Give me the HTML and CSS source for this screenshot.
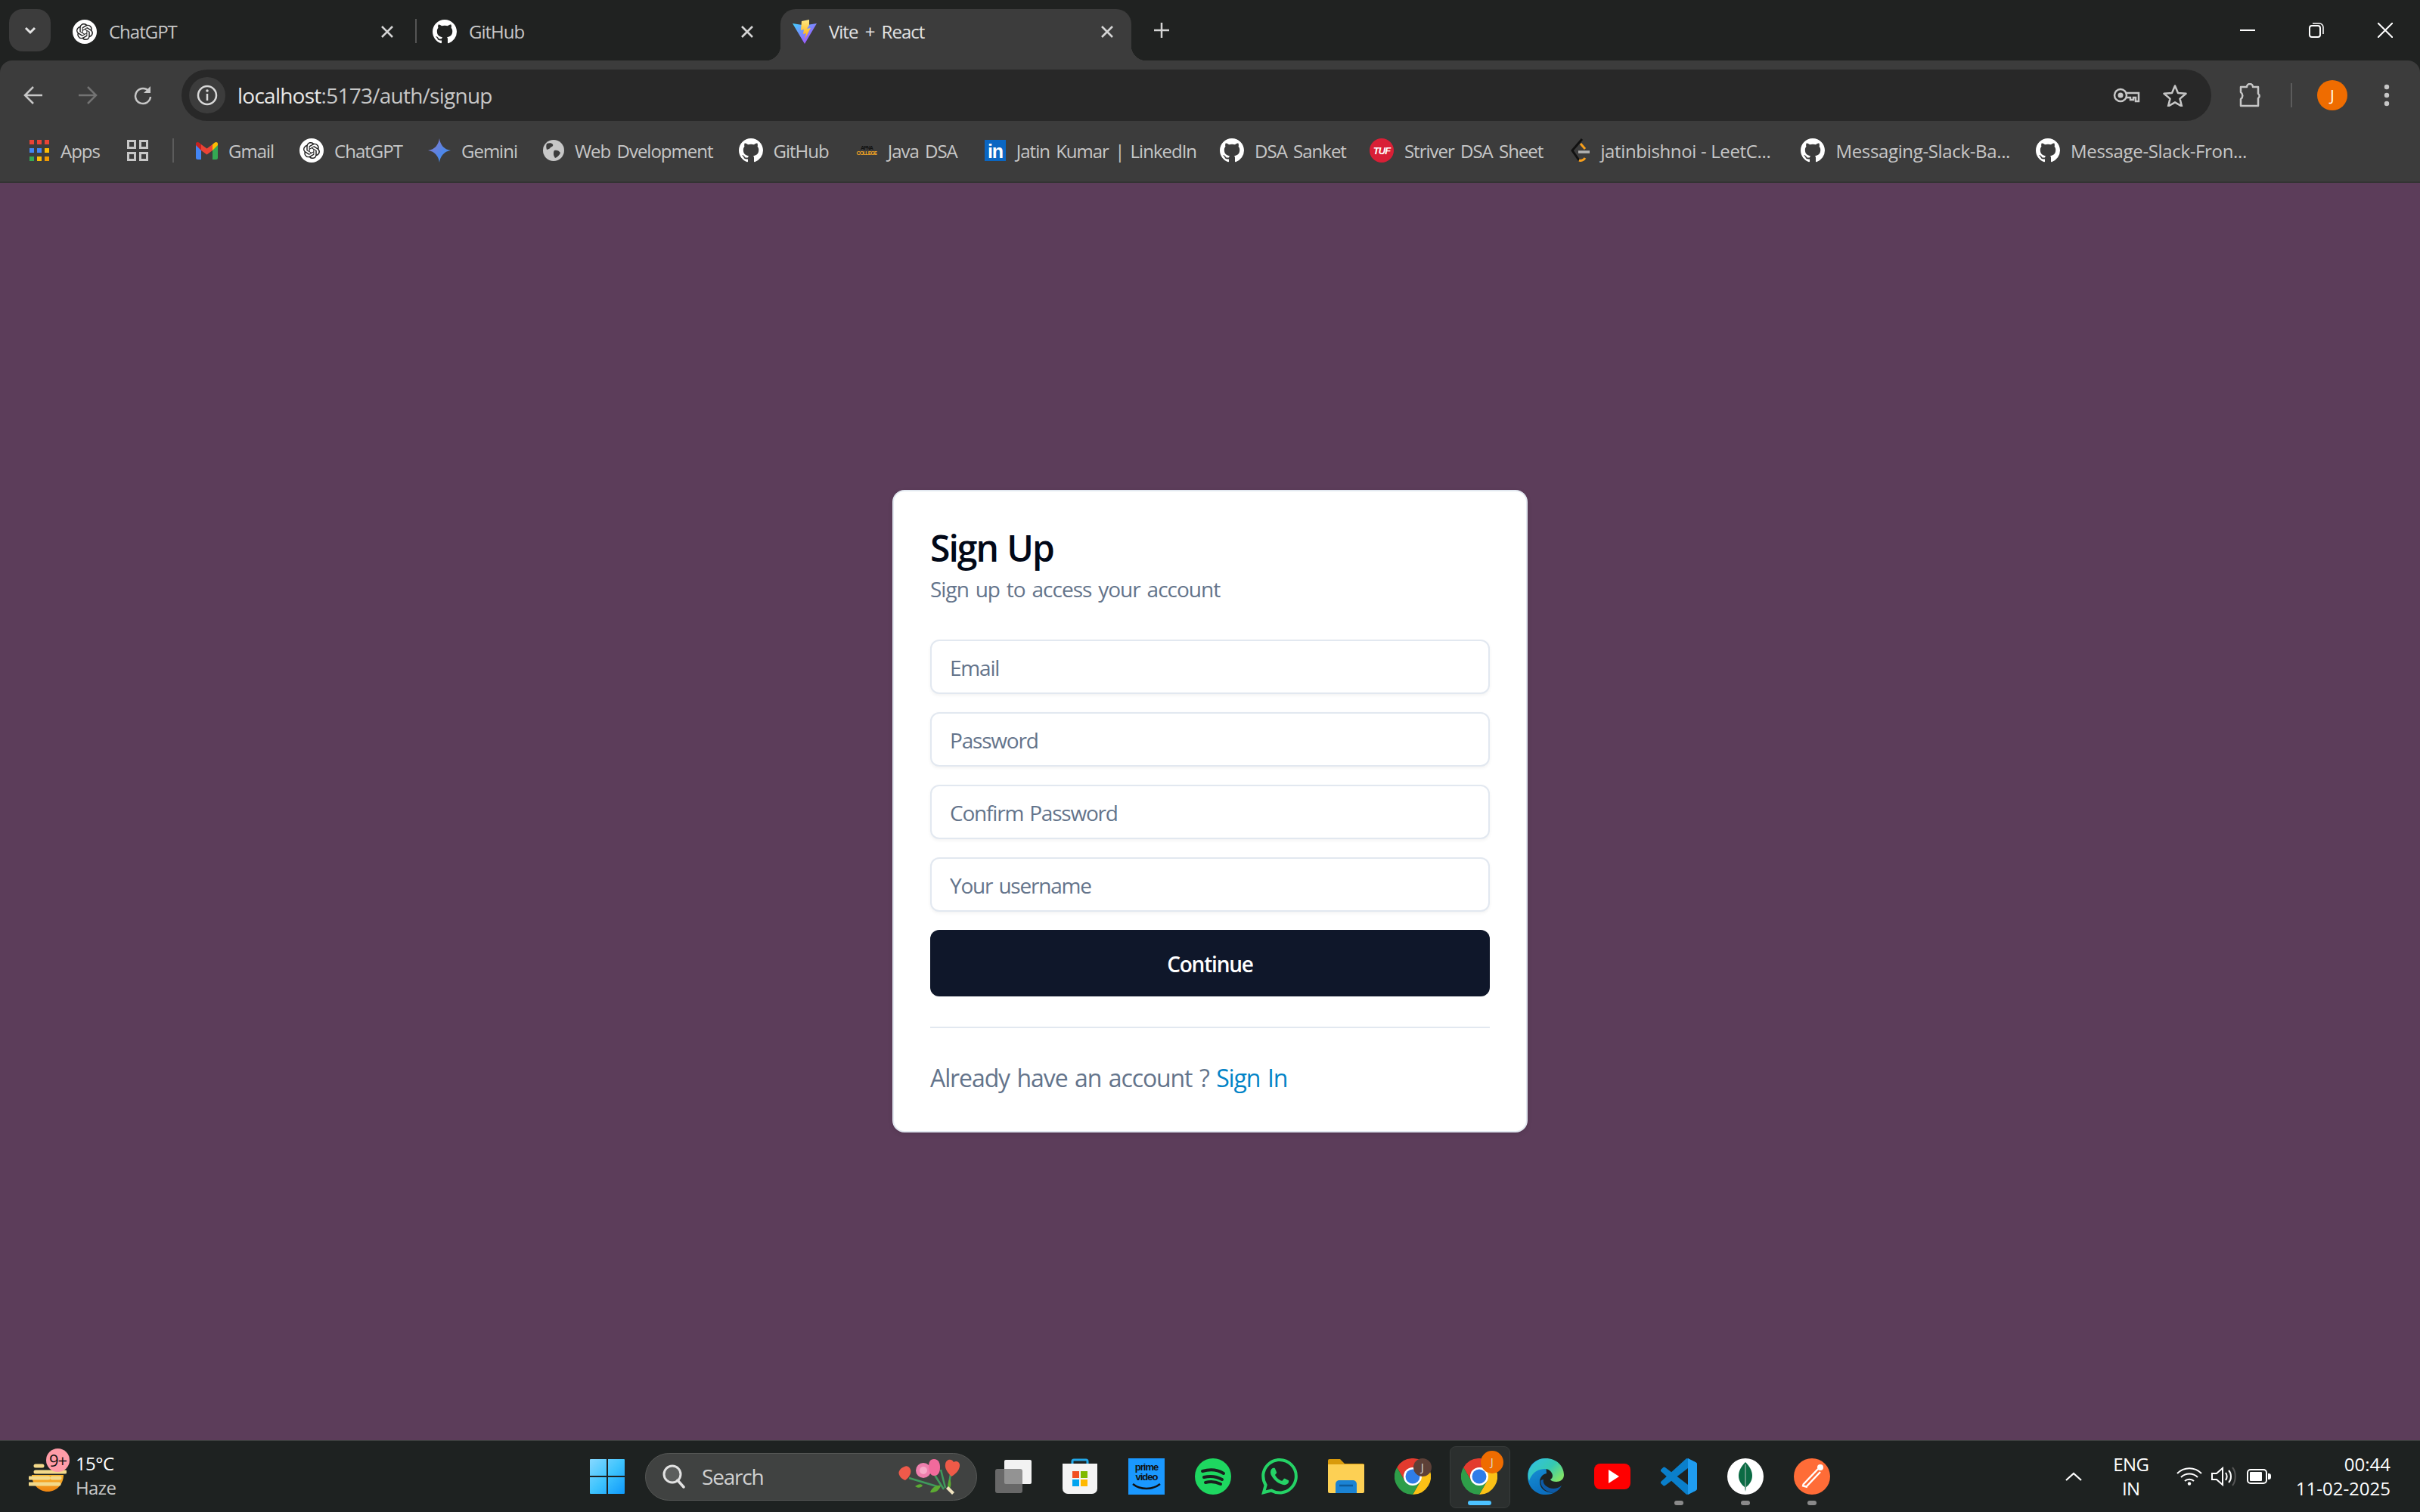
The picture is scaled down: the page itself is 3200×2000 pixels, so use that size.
FILE: index.html
```html
<!DOCTYPE html>
<html lang="en">
<head>
  <meta charset="UTF-8" />
  <title>Vite + React</title>
  <link rel="stylesheet" href="styles.css">
</head>
<body>

<svg class="defs" xmlns="http://www.w3.org/2000/svg">
  <symbol id="i-github" viewBox="0 0 16 16">
    <path fill="#fff" d="M8 0C3.58 0 0 3.58 0 8c0 3.54 2.29 6.53 5.47 7.59.4.07.55-.17.55-.38 0-.19-.01-.82-.01-1.49-2.01.37-2.53-.49-2.69-.94-.09-.23-.48-.94-.82-1.13-.28-.15-.68-.52-.01-.53.63-.01 1.08.58 1.23.82.72 1.21 1.87.87 2.33.66.07-.52.28-.87.51-1.07-1.78-.2-3.64-.89-3.64-3.95 0-.87.31-1.59.82-2.15-.08-.2-.36-1.02.08-2.12 0 0 .67-.21 2.2.82.64-.18 1.32-.27 2-.27.68 0 1.36.09 2 .27 1.53-1.04 2.2-.82 2.2-.82.44 1.1.16 1.92.08 2.12.51.56.82 1.27.82 2.15 0 3.07-1.87 3.75-3.65 3.95.29.25.54.73.54 1.48 0 1.07-.01 1.93-.01 2.2 0 .21.15.46.55.38A8.013 8.013 0 0016 8c0-4.42-3.58-8-8-8z"/>
  </symbol>
  <symbol id="i-chatgpt" viewBox="0 0 32 32">
    <circle cx="16" cy="16" r="16" fill="#fff"/>
    <path transform="translate(5 5) scale(.917)" fill="#222" d="M22.282 9.821a5.985 5.985 0 0 0-.516-4.91 6.046 6.046 0 0 0-6.51-2.9A6.065 6.065 0 0 0 4.981 4.18a5.985 5.985 0 0 0-3.998 2.9 6.046 6.046 0 0 0 .743 7.097 5.98 5.98 0 0 0 .51 4.911 6.051 6.051 0 0 0 6.515 2.9A5.985 5.985 0 0 0 13.26 24a6.056 6.056 0 0 0 5.772-4.206 5.99 5.99 0 0 0 3.997-2.9 6.056 6.056 0 0 0-.747-7.073zM13.26 22.43a4.476 4.476 0 0 1-2.876-1.04l.141-.081 4.779-2.758a.795.795 0 0 0 .392-.681v-6.737l2.02 1.168a.071.071 0 0 1 .038.052v5.583a4.504 4.504 0 0 1-4.494 4.494zM3.6 18.304a4.47 4.47 0 0 1-.535-3.014l.142.085 4.783 2.759a.771.771 0 0 0 .78 0l5.843-3.369v2.332a.08.08 0 0 1-.033.062L9.74 19.95a4.5 4.5 0 0 1-6.14-1.646zM2.34 7.896a4.485 4.485 0 0 1 2.366-1.973V11.6a.766.766 0 0 0 .388.676l5.815 3.355-2.02 1.168a.076.076 0 0 1-.071 0l-4.83-2.786A4.504 4.504 0 0 1 2.34 7.872zm16.597 3.855l-5.833-3.387L15.119 7.2a.076.076 0 0 1 .071 0l4.83 2.791a4.494 4.494 0 0 1-.676 8.105v-5.678a.79.79 0 0 0-.407-.667zm2.01-3.023l-.141-.085-4.774-2.782a.776.776 0 0 0-.785 0L9.409 9.23V6.897a.066.066 0 0 1 .028-.061l4.83-2.787a4.5 4.5 0 0 1 6.68 4.66zm-12.64 4.135l-2.02-1.164a.08.08 0 0 1-.038-.057V6.075a4.5 4.5 0 0 1 7.375-3.453l-.142.08L8.704 5.46a.795.795 0 0 0-.393.681zm1.097-2.365l2.602-1.5 2.607 1.5v2.999l-2.597 1.5-2.607-1.5Z"/>
  </symbol>
  <symbol id="i-chrome" viewBox="0 0 48 48">
    <path fill="#e33b2e" d="M3.2 12A24 24 0 0 1 44.8 12H24L13.6 30Z"/>
    <path fill="#fbc116" d="M44.8 12A24 24 0 0 1 24 48L34.4 30 24 12Z"/>
    <path fill="#2e9e49" d="M24 48A24 24 0 0 1 3.2 12L13.6 30H34.4Z"/>
    <circle cx="24" cy="24" r="12" fill="#fff"/>
    <circle cx="24" cy="24" r="9.5" fill="#2f7de8"/>
  </symbol>
  <symbol id="i-close" viewBox="0 0 16 16">
    <path d="M1 1l14 14M15 1L1 15" stroke="#d5d5d5" stroke-width="2.600" fill="none"/>
  </symbol>
</svg>

<header class="chrome">
  <div class="titlebar">
    <button class="tab-search">
      <svg width="16" height="16" viewBox="0 0 16 16"><path d="M2 5l6 6 6-6" fill="none" stroke="#e3e3e3" stroke-width="3"/></svg>
    </button>
    <div class="tab tab-sep">
      <svg class="tab-icon" width="32" height="32"><use href="#i-chatgpt"/></svg>
      <span class="tab-title">ChatGPT</span>
      <svg class="tab-close" width="16" height="16"><use href="#i-close"/></svg>
    </div>
    <div class="tab">
      <svg class="tab-icon" width="32" height="32"><use href="#i-github"/></svg>
      <span class="tab-title">GitHub</span>
      <svg class="tab-close" width="16" height="16"><use href="#i-close"/></svg>
    </div>
    <div class="tab tab-active">
      <svg class="tab-icon" width="32" height="32" viewBox="0 0 32 32">
        <defs>
          <linearGradient id="viteA" x1="0" y1="0" x2="1" y2="1"><stop offset="0" stop-color="#41d1ff"/><stop offset="1" stop-color="#bd34fe"/></linearGradient>
          <linearGradient id="viteB" x1="0" y1="0" x2="0" y2="1"><stop offset="0" stop-color="#ffea83"/><stop offset="1" stop-color="#ffa800"/></linearGradient>
        </defs>
        <path fill="url(#viteA)" d="M0 5l16 2.500 16-2.500-16 27z"/>
        <path fill="url(#viteB)" d="M22 0l-10 2-1 12 4-1-1 6 4-1-2 8 8-15-5 1 3-5z"/>
      </svg>
      <span class="tab-title">Vite + React</span>
      <svg class="tab-close" width="16" height="16"><use href="#i-close"/></svg>
    </div>
    <svg class="new-tab" width="22" height="22" viewBox="0 0 22 22"><path d="M11 1v20M1 11h20" stroke="#d5d5d5" stroke-width="2.500"/></svg>

    <div class="win-controls">
      <button class="win-btn"><svg width="20" height="20" viewBox="0 0 20 20"><path d="M0 10h20" stroke="#fff" stroke-width="2"/></svg></button>
      <button class="win-btn"><svg width="20" height="20" viewBox="0 0 20 20"><rect x="1" y="4" width="14" height="15" rx="3" fill="none" stroke="#fff" stroke-width="2"/><path d="M5 1h9a5 5 0 0 1 5 5v9" fill="none" stroke="#fff" stroke-width="1.500"/></svg></button>
      <button class="win-btn"><svg width="20" height="20" viewBox="0 0 20 20"><path d="M0 0l20 20M20 0L0 20" stroke="#fff" stroke-width="2"/></svg></button>
    </div>
  </div>

  <div class="toolbar">
    <button class="tool-btn">
      <svg width="26" height="26" viewBox="0 0 26 26"><path d="M25 13H3M13 2L2 13l11 11" fill="none" stroke="#c7c7c7" stroke-width="2.500"/></svg>
    </button>
    <button class="tool-btn">
      <svg width="26" height="26" viewBox="0 0 26 26"><path d="M1 13h22M13 2l11 11-11 11" fill="none" stroke="#737373" stroke-width="2.500"/></svg>
    </button>
    <button class="tool-btn">
      <svg width="26" height="26" viewBox="0 0 26 26"><path d="M22 8a10 10 0 1 0 2 7" fill="none" stroke="#c7c7c7" stroke-width="2.500"/><path d="M24 1v9h-9z" fill="#c7c7c7"/></svg>
    </button>
    <div class="omnibox">
      <span class="site-info">
        <svg width="28" height="28" viewBox="0 0 28 28"><circle cx="14" cy="14" r="12" fill="none" stroke="#d8d8d8" stroke-width="2.500"/><path d="M14 12v9" stroke="#d8d8d8" stroke-width="2.500"/><circle cx="14" cy="8" r="1.800" fill="#d8d8d8"/></svg>
      </span>
      <span class="url"><b>localhost</b>:5173/auth/signup</span>
      <button class="omni-btn omni-key">
        <svg width="36" height="22" viewBox="0 0 36 22"><circle cx="10" cy="11" r="8" fill="none" stroke="#c7c7c7" stroke-width="2.500"/><circle cx="10" cy="11" r="3.500" fill="#c7c7c7"/><path d="M18 8h16v11h-4v-5h-3v3h-4v-3h-5" fill="none" stroke="#c7c7c7" stroke-width="2.500"/></svg>
      </button>
      <button class="omni-btn">
        <svg width="32" height="30" viewBox="0 0 32 30"><path d="M16 2.500l4 9.500 10.500.8-8 6.800 2.500 10-9-5.300-9 5.300 2.500-10-8-6.800L12 12z" fill="none" stroke="#c7c7c7" stroke-width="2.500" stroke-linejoin="round"/></svg>
      </button>
    </div>
    <button class="tool-btn tool-ext">
      <svg width="30" height="32" viewBox="0 0 30 32"><path d="M2 5h8a4 4 0 0 1 8 0h7v9a3.500 3.500 0 0 1 0 6v10H2v-9a5.500 5.500 0 0 0 0-9z" fill="none" stroke="#c7c7c7" stroke-width="2.500" stroke-linejoin="round"/></svg>
    </button>
    <span class="tool-sep"></span>
    <button class="tool-btn">
      <span class="avatar">J</span>
    </button>
    <button class="tool-btn">
      <svg width="8" height="30" viewBox="0 0 8 30"><circle cx="4" cy="4" r="3.200" fill="#c7c7c7"/><circle cx="4" cy="15" r="3.200" fill="#c7c7c7"/><circle cx="4" cy="26" r="3.200" fill="#c7c7c7"/></svg>
    </button>
  </div>

  <nav class="bookmarks">
    <a class="bm bm-apps">
      <svg width="26" height="28" viewBox="0 0 26 28">
        <path fill="#ea4335" d="M0 0h6v6H0zM10 0h6v6h-6zM20 0h6v6h-6z"/>
        <path fill="#4285f4" d="M0 11h6v6H0zM10 11h6v6h-6z"/><path fill="#fbbc05" d="M20 11h6v6h-6z"/>
        <path fill="#34a853" d="M0 22h6v6H0z"/><path fill="#fbbc05" d="M10 22h6v6h-6z"/><path fill="#f29900" d="M20 22h6v6h-6z"/>
      </svg>
      <span>Apps</span>
    </a>
    <a class="bm bm-far">
      <svg width="28" height="28" viewBox="0 0 28 28" fill="none" stroke="#c7c7c7" stroke-width="3"><rect x="1.500" y="1.500" width="9" height="9"/><rect x="17.500" y="1.500" width="9" height="9"/><rect x="1.500" y="17.500" width="9" height="9"/><rect x="17.500" y="17.500" width="9" height="9"/></svg>
    </a>
    <span class="bm-sep"></span>
    <a class="bm">
      <svg width="29" height="24" viewBox="0 0 29 24">
        <path fill="#4285f4" d="M0 3v18.500A2.500 2.500 0 0 0 2.500 24H7V11z"/>
        <path fill="#34a853" d="M22 11v13h4.500a2.500 2.500 0 0 0 2.500-2.500V3z"/>
        <path fill="#ea4335" d="M7 4v8l7.500 5.500L22 12V4l-7.500 5.500z"/>
        <path fill="#c5221f" d="M0 3v2l7 7V4L4 1.500C2.300.300 0 1 0 3z"/>
        <path fill="#fbbc04" d="M29 3v2l-7 7V4l3-2.500C26.700.300 29 1 29 3z"/>
      </svg>
      <span>Gmail</span>
    </a>
    <a class="bm">
      <svg width="32" height="32"><use href="#i-chatgpt"/></svg>
      <span>ChatGPT</span>
    </a>
    <a class="bm">
      <svg width="30" height="32" viewBox="0 0 30 32">
        <defs><linearGradient id="gem" x1="0" y1="0" x2="1" y2="1"><stop offset="0" stop-color="#9177c7"/><stop offset=".6" stop-color="#4f86e8"/><stop offset="1" stop-color="#3d9bf0"/></linearGradient></defs>
        <path fill="url(#gem)" d="M15 0c1 8 6 15 15 16-9 1-14 8-15 16-1-8-6-15-15-16 9-1 14-8 15-16z"/>
      </svg>
      <span>Gemini</span>
    </a>
    <a class="bm">
      <svg width="28" height="28" viewBox="0 0 28 28">
        <circle cx="14" cy="14" r="14" fill="#c7c7c7"/>
        <path fill="#3c3c3c" d="M5 5c3-1 7-1 8 1 1 2-1 3-3 4-1 2-3 2-5 3-1-3-1-6 0-8zM15 14c3-1 6 0 8 3-1 3-4 6-7 7-1-2-2-3-2-5s0-4 1-5z"/>
      </svg>
      <span>Web Dvelopment</span>
    </a>
    <a class="bm">
      <svg width="32" height="32"><use href="#i-github"/></svg>
      <span>GitHub</span>
    </a>
    <a class="bm bm-far">
      <svg width="28" height="14" viewBox="0 0 28 14">
        <text class="logo-apna" x="14" y="6" text-anchor="middle">APNA</text>
        <text class="logo-college" x="14" y="13" text-anchor="middle">COLLEGE</text>
      </svg>
      <span>Java DSA</span>
    </a>
    <a class="bm bm-far">
      <svg width="28" height="28" viewBox="0 0 28 28">
        <rect width="28" height="28" fill="#0a66c2"/>
        <text class="logo-in" x="14" y="24" text-anchor="middle">in</text>
      </svg>
      <span>Jatin Kumar | LinkedIn</span>
    </a>
    <a class="bm bm-near">
      <svg width="32" height="32"><use href="#i-github"/></svg>
      <span>DSA Sanket</span>
    </a>
    <a class="bm bm-near">
      <svg width="32" height="32" viewBox="0 0 32 32">
        <circle cx="16" cy="16" r="16" fill="#d91f36"/>
        <text class="logo-tuf" x="16" y="21" text-anchor="middle">TUF</text>
      </svg>
      <span>Striver DSA Sheet</span>
    </a>
    <a class="bm bm-far bm-trunc">
      <svg width="26" height="32" viewBox="0 0 26 32" fill="none">
        <path d="M16 1L3 16l9 13" stroke="#111" stroke-width="3"/>
        <path d="M14 7l6 7M12 29c3 1 6 0 8-3" stroke="#f89f1b" stroke-width="3"/>
        <path d="M11 18h15" stroke="#b3b3b3" stroke-width="3.500"/>
      </svg>
      <span>jatinbishnoi - LeetC...</span>
    </a>
    <a class="bm bm-farther bm-trunc">
      <svg width="32" height="32"><use href="#i-github"/></svg>
      <span>Messaging-Slack-Ba...</span>
    </a>
    <a class="bm bm-trunc">
      <svg width="32" height="32"><use href="#i-github"/></svg>
      <span>Message-Slack-Fron...</span>
    </a>
  </nav>
</header>

<main class="page">
  <section class="card">
    <h1 class="card-title">Sign Up</h1>
    <p class="card-sub">Sign up to access your account</p>
    <form class="signup-form">
      <input class="field" type="email" placeholder="Email">
      <input class="field" type="password" placeholder="Password">
      <input class="field" type="password" placeholder="Confirm Password">
      <input class="field" type="text" placeholder="Your username">
      <button class="continue" type="button">Continue</button>
    </form>
    <hr class="divider">
    <p class="switch">Already have an account ? <a>Sign In</a></p>
  </section>
</main>

<footer class="taskbar">
  <div class="weather">
    <svg class="weather-icon" width="50" height="45" viewBox="0 0 50 45">
      <defs><linearGradient id="sun" x1="0" y1="0" x2="0" y2="1"><stop offset="0" stop-color="#f9b52c"/><stop offset="1" stop-color="#ef8511"/></linearGradient></defs>
      <path d="M4 20h42c0 12-9 22-21 22S4 32 4 20z" fill="url(#sun)"/>
      <path d="M9 8h9M9 16h39M1 24h25M31 24h10M1 32h39" stroke="#f3d98a" stroke-width="5" stroke-linecap="round"/>
    </svg>
    <span class="weather-badge">9+</span>
    <div class="weather-text">
      <span>15°C</span>
      <span class="weather-cond">Haze</span>
    </div>
  </div>

  <div class="task-center">
    <svg class="win-logo" width="46" height="46" viewBox="0 0 46 46">
      <defs><linearGradient id="winG" x1="0" y1="0" x2="1" y2="1"><stop offset="0" stop-color="#86d8ff"/><stop offset=".5" stop-color="#3fc4fd"/><stop offset="1" stop-color="#0f9afb"/></linearGradient></defs>
      <path fill="url(#winG)" d="M1 0h21v22H0V1a1 1 0 0 1 1-1zM24 0h21a1 1 0 0 1 1 1v21H24zM0 24h22v22H1a1 1 0 0 1-1-1zM24 24h22v21a1 1 0 0 1-1 1H24z"/>
    </svg>
    <div class="search">
      <svg width="30" height="32" viewBox="0 0 30 32"><circle cx="13" cy="13" r="11" fill="#5c5e5d" stroke="#e2e2e2" stroke-width="3"/><path d="M20 21l8 9" stroke="#e2e2e2" stroke-width="3.500" stroke-linecap="round"/></svg>
      <span class="search-text">Search</span>
      <svg class="search-flowers" width="84" height="47" viewBox="0 0 84 47">
        <path d="M14 25l40 12M46 18l14 22M56 14l6 24M70 14l-4 24" stroke="#3f9a5c" stroke-width="2.500" fill="none"/>
        <path d="M22 36c4-3 8-4 10-1-2 3-6 4-10 1zM42 44c2-6 8-10 14-9-2 7-8 10-14 9zM68 26c-3 5-3 10-1 14 3-3 3-9 1-14z" fill="#5cab32"/>
        <path d="M66 36l8 8-3 3-8-8z" fill="#efe3c0"/>
        <path d="M8 10c4-2 7 1 8 4s0 9-7 14C3 26-1 20 1 16c1-3 4-5 7-6z" fill="#ef5a4a"/>
        <circle cx="33" cy="15" r="10" fill="#ee7fae"/><circle cx="33" cy="15" r="5" fill="#f7a9c8"/>
        <path d="M47 0c6 0 8 5 8 11s-2 11-8 11c-5 0-7-6-7-12 0-6 2-10 7-10z" fill="#f26a9c"/>
        <path d="M66 1c4-1 6 1 7 3 3-2 7-1 8 3 1 6-5 13-11 16-5-5-9-11-8-16 0-3 2-5 4-6z" fill="#ee5a48"/>
      </svg>
    </div>
    <div class="task-apps">
      <span class="task-item">
        <svg width="48" height="48" viewBox="0 0 48 48">
          <rect x="12" y="2" width="36" height="32" rx="2" fill="#f2f2f2"/>
          <rect x="0" y="14" width="36" height="32" rx="3" fill="#7b7b7b" fill-opacity=".8"/>
        </svg>
      </span>
      <span class="task-item">
        <svg width="48" height="48" viewBox="0 0 48 48">
          <path d="M14 10V4a2 2 0 0 1 2-2h16a2 2 0 0 1 2 2v6" fill="none" stroke="#22a7e8" stroke-width="3"/>
          <path d="M1 7h46v33a7 7 0 0 1-7 7H8a7 7 0 0 1-7-7z" fill="#f4f4f4"/>
          <path fill="#f25022" d="M14 17h9v9h-9z"/><path fill="#7fba00" d="M25 17h9v9h-9z"/>
          <path fill="#00a4ef" d="M14 28h9v9h-9z"/><path fill="#ffb900" d="M25 28h9v9h-9z"/>
        </svg>
      </span>
      <span class="task-item">
        <svg width="48" height="48" viewBox="0 0 48 48">
          <rect width="48" height="48" fill="#1a98ff"/>
          <text class="logo-prime" x="24" y="16" text-anchor="middle">prime</text>
          <text class="logo-prime" x="24" y="29" text-anchor="middle">video</text>
          <path d="M6 34c10 8 26 8 36 0" fill="none" stroke="#111" stroke-width="2.500"/>
        </svg>
      </span>
      <span class="task-item">
        <svg width="48" height="48" viewBox="0 0 48 48">
          <circle cx="24" cy="24" r="24" fill="#1ed760"/>
          <path d="M10 17c10-3 20-2 28 3M12 25c8-2 17-1 24 3M14 32c7-2 14-1 20 2" fill="none" stroke="#1b1f1e" stroke-width="4" stroke-linecap="round"/>
        </svg>
      </span>
      <span class="task-item">
        <svg width="48" height="48" viewBox="0 0 24 24"><path fill="#25d366" d="M17.472 14.382c-.297-.149-1.758-.867-2.03-.967-.273-.099-.471-.148-.67.15-.197.297-.767.966-.94 1.164-.173.199-.347.223-.644.075-.297-.15-1.255-.463-2.39-1.475-.883-.788-1.48-1.761-1.653-2.059-.173-.297-.018-.458.13-.606.134-.133.298-.347.446-.52.149-.174.198-.298.298-.497.099-.198.05-.371-.025-.52-.075-.149-.669-1.612-.916-2.207-.242-.579-.487-.5-.669-.51-.173-.008-.371-.01-.57-.01-.198 0-.52.074-.792.372-.272.297-1.04 1.016-1.04 2.479 0 1.462 1.065 2.875 1.213 3.074.149.198 2.096 3.2 5.077 4.487.709.306 1.262.489 1.694.625.712.227 1.36.195 1.871.118.571-.085 1.758-.719 2.006-1.413.248-.694.248-1.289.173-1.413-.074-.124-.272-.198-.57-.347m-5.421 7.403h-.004a9.87 9.87 0 01-5.031-1.378l-.361-.214-3.741.982.998-3.648-.235-.374a9.86 9.86 0 01-1.51-5.26c.001-5.45 4.436-9.884 9.888-9.884 2.64 0 5.122 1.03 6.988 2.898a9.825 9.825 0 012.893 6.994c-.003 5.45-4.437 9.884-9.885 9.884m8.413-18.297A11.815 11.815 0 0012.05 0C5.495 0 .16 5.335.157 11.892c0 2.096.547 4.142 1.588 5.945L.057 24l6.305-1.654a11.882 11.882 0 005.683 1.448h.005c6.554 0 11.89-5.335 11.893-11.893a11.821 11.821 0 00-3.48-8.413z"/></svg>
      </span>
      <span class="task-item">
        <svg width="48" height="48" viewBox="0 0 48 48">
          <path d="M0 3a2 2 0 0 1 2-2h14l6 6h24a2 2 0 0 1 2 2v8H0z" fill="#d99a0b"/>
          <path d="M0 8h48v36a2 2 0 0 1-2 2H2a2 2 0 0 1-2-2z" fill="#fdd054"/>
          <path d="M10 46V34a5 5 0 0 1 5-5h18a5 5 0 0 1 5 5v12z" fill="#1a83d4"/>
          <path d="M15 36h18" stroke="#0d5b99" stroke-width="2.500"/>
        </svg>
      </span>
      <span class="task-item">
        <svg width="48" height="48"><use href="#i-chrome"/></svg>
        <span class="profile-badge profile-brown">J</span>
      </span>
      <span class="task-item task-active">
        <svg width="48" height="48"><use href="#i-chrome"/></svg>
        <span class="profile-badge profile-orange">J</span>
        <span class="task-bar"></span>
      </span>
      <span class="task-item">
        <svg width="48" height="48" viewBox="0 0 48 48">
          <defs>
            <linearGradient id="edgeA" x1="0" y1="0" x2="1" y2=".7"><stop offset="0" stop-color="#32bfe8"/><stop offset=".6" stop-color="#36c9b0"/><stop offset="1" stop-color="#7fe36a"/></linearGradient>
            <linearGradient id="edgeB" x1="0" y1="0" x2=".4" y2="1"><stop offset="0" stop-color="#1a9ad8"/><stop offset="1" stop-color="#0b6fc0"/></linearGradient>
          </defs>
          <path fill="url(#edgeB)" d="M24 0C10 0 0 10 0 24c0 14 10 24 24 24 5 0 9-1 12-3 -9 2-20-3-20-14 0-6 4-10 9-11l-1-12z"/>
          <path fill="#0d5aa7" d="M17 30c0 10 11 17 19 15 4-2 7-5 9-9-6 5-15 5-20 1-3-2-5-5-4-9-2 0-4 1-4 2z"/>
          <path fill="url(#edgeA)" d="M24 0c14 0 24 10 24 22 0 6-5 9-10 9-4 0-7-1-8-3 2-1 3-3 3-5 0-4-4-9-10-9C13 14 5 20 2 30 0 24 0 18 3 13 7 5 15 0 24 0z"/>
        </svg>
      </span>
      <span class="task-item">
        <svg width="48" height="48" viewBox="0 0 48 48">
          <rect y="7" width="48" height="34" rx="8" fill="#f00"/>
          <path d="M19 15l14 9-14 9z" fill="#fff"/>
        </svg>
      </span>
      <span class="task-item">
        <svg width="48" height="48" viewBox="0 0 24 24">
          <path fill="#0a7fcb" d="M23.15 2.587L18.21.21a1.494 1.494 0 0 0-1.705.29l-9.46 8.63-4.12-3.128a.999.999 0 0 0-1.276.057L.327 7.261A1 1 0 0 0 .326 8.74L3.899 12 .326 15.26a1 1 0 0 0 .001 1.479L1.65 17.94a.999.999 0 0 0 1.276.057l4.12-3.128 9.46 8.63a1.492 1.492 0 0 0 1.704.29l4.942-2.377A1.5 1.5 0 0 0 24 20.06V3.939a1.5 1.5 0 0 0-.85-1.352zm-5.146 14.861L10.826 12l7.178-5.448v10.896z"/>
          <path fill="#1f9cf0" d="M18 0v6.552L18.004 17.448V24l5.146-2.587A1.5 1.500 0 0 0 24 20.060V3.939a1.500 1.500 0 0 0-.85-1.352z"/>
        </svg>
        <span class="task-dot"></span>
      </span>
      <span class="task-item">
        <svg width="48" height="48" viewBox="0 0 48 48">
          <circle cx="24" cy="24" r="24" fill="#fff"/>
          <path d="M24 5c6 6 9 12 9 18 0 7-4 12-8 15l-1 6-1-6c-4-3-8-8-8-15 0-6 3-12 9-18z" fill="#0b6b44"/>
          <path d="M24 8v32" stroke="#b8c4bd" stroke-width="1"/>
        </svg>
        <span class="task-dot"></span>
      </span>
      <span class="task-item">
        <svg width="48" height="48" viewBox="0 0 48 48">
          <circle cx="24" cy="24" r="24" fill="#ff6c37"/>
          <path d="M12 35l20-21M17 37l18-19M11 36l7 2" fill="none" stroke="#fff" stroke-width="2.500"/>
          <circle cx="35" cy="12" r="4" fill="#fff"/>
        </svg>
        <span class="task-dot"></span>
      </span>
    </div>
  </div>

  <div class="tray">
    <svg class="tray-chevron" width="22" height="12" viewBox="0 0 22 12"><path d="M1 11L11 2l10 9" fill="none" stroke="#fff" stroke-width="2.200"/></svg>
    <div class="tray-lang"><span>ENG</span><span>IN</span></div>
    <svg class="tray-icon tray-wifi" width="34" height="24" viewBox="0 0 34 24" fill="none" stroke="#fff" stroke-width="2"><path d="M1 8c9-9 23-9 32 0M6 13c6-6 16-6 22 0M11 18c3-3 9-3 12 0"/><circle cx="17" cy="21.500" r="2.200" fill="#fff" stroke="none"/></svg>
    <svg class="tray-icon" width="34" height="28" viewBox="0 0 34 28" fill="none" stroke="#fff" stroke-width="2"><path d="M1 10h6l8-7v22l-8-7H1z"/><path d="M19 9c2 3 2 7 0 10M23 6c4 4 4 12 0 16"/><path d="M28 2c5 6 5 18 0 24" stroke="#555"/></svg>
    <svg class="tray-icon" width="32" height="20" viewBox="0 0 32 20"><rect x="1" y="1" width="25" height="18" rx="4" fill="none" stroke="#fff" stroke-width="2"/><rect x="4" y="4" width="16" height="12" rx="1" fill="#fff"/><path d="M28 6h1a3 3 0 0 1 3 3v2a3 3 0 0 1-3 3h-1z" fill="#fff"/></svg>
    <div class="tray-clock"><span>00:44</span><span>11-02-2025</span></div>
  </div>
</footer>

</body>
</html>
```

FILE: styles.css
```css
* {
  box-sizing: border-box;
}
body {
  margin: 0;
  height: 100vh;
  overflow: hidden;
  display: flex;
  flex-direction: column;
  font-family: "Open Sans", "Noto Sans", sans-serif;
  background-color: #5c3d5a;
}
button {
  border: none;
  background: none;
  padding: 0;
  font-family: inherit;
}
.defs {
  display: block;
  width: 0;
  height: 0;
}

/* browser chrome */
.chrome {
  flex: none;
  background-color: #202221;
}
.titlebar {
  height: 80px;
  display: flex;
  align-items: flex-end;
}
.tab-search {
  width: 55px;
  height: 56px;
  margin: 0 13px 12px 12px;
  border-radius: 18px;
  background-color: #3c3c3c;
  display: flex;
  align-items: center;
  justify-content: center;
}
.tab {
  position: relative;
  width: 464px;
  height: 68px;
  margin-right: 12px;
  padding: 0 24px 8px 16px;
  display: flex;
  align-items: center;
  color: #c7c7c7;
  font-size: 24px;
  letter-spacing: -1px;
  word-spacing: 4px;
}
.tab-icon {
  flex: none;
  margin-right: 16px;
}
.tab-title {
  flex: 1;
  margin-bottom: 2px;
}
.tab-sep::after {
  content: "";
  position: absolute;
  right: -7px;
  top: 13px;
  width: 2px;
  height: 32px;
  background-color: #555;
}
.tab-active {
  background-color: #3c3c3c;
  border-radius: 20px 20px 0 0;
  color: #e3e3e3;
}
.tab-active::before,
.tab-active::after {
  content: "";
  position: absolute;
  bottom: 0;
  width: 20px;
  height: 20px;
}
.tab-active::before {
  left: -20px;
  background: radial-gradient(circle at 0 0, transparent 20px, #3c3c3c 20.5px);
}
.tab-active::after {
  right: -20px;
  background: radial-gradient(circle at 100% 0, transparent 20px, #3c3c3c 20.5px);
}
.new-tab {
  margin: 0 0 29px 17px;
}
.win-controls {
  margin-left: auto;
  padding-right: 1px;
  display: flex;
  align-self: flex-start;
}
.win-btn {
  width: 91px;
  height: 80px;
  display: flex;
  align-items: center;
  justify-content: center;
}

.toolbar {
  height: 80px;
  padding: 12px 8px 0;
  background-color: #3c3c3c;
  border-radius: 16px 16px 0 0;
  display: flex;
  align-items: flex-start;
}
.tool-btn {
  flex: none;
  width: 72px;
  height: 68px;
  display: flex;
  align-items: center;
  justify-content: center;
}
.tool-ext {
  margin-left: 16px;
}
.tool-sep {
  flex: none;
  width: 2px;
  height: 32px;
  margin: 18px 17px;
  background-color: #5c5c5c;
}
.avatar {
  width: 40px;
  height: 40px;
  border-radius: 50%;
  background-color: #ef6c00;
  color: #fff;
  font-size: 20px;
  line-height: 40px;
  text-align: center;
}
.omnibox {
  flex: 1;
  height: 68px;
  margin-left: 16px;
  padding: 0 16px 0 10px;
  border-radius: 34px;
  background-color: #282828;
  display: flex;
  align-items: center;
}
.site-info {
  flex: none;
  width: 48px;
  height: 48px;
  border-radius: 50%;
  background-color: #3c3c3c;
  display: flex;
  align-items: center;
  justify-content: center;
}
.url {
  flex: 1;
  margin-left: 16px;
  font-size: 28px;
  letter-spacing: -0.75px;
  color: #c7c7c7;
}
.url b {
  font-weight: 400;
  color: #e8e8e8;
}
.omni-btn {
  width: 64px;
  display: flex;
  justify-content: center;
}

.bookmarks {
  height: 82px;
  padding: 0 0 2px 39px;
  background-color: #3c3c3c;
  border-bottom: 2px solid #333;
  display: flex;
  align-items: center;
  gap: 34px;
  color: #c7c7c7;
  font-size: 24px;
  letter-spacing: -1px;
  word-spacing: 3px;
  white-space: nowrap;
}
.bm {
  display: flex;
  align-items: center;
  gap: 14px;
}
.bm-apps {
  gap: 15px;
}
.bm-far {
  margin-left: 2px;
}
.bm-farther {
  margin-left: 6px;
}
.bm-near {
  margin-left: -3px;
}
.bm-trunc {
  letter-spacing: -0.35px;
  word-spacing: 0;
}
.bm-sep {
  width: 2px;
  height: 32px;
  margin: 0 -5px 0 -2px;
  background-color: #5c5c5c;
}
.logo-apna {
  font: 700 7px "Liberation Sans", sans-serif;
  fill: #111;
}
.logo-college {
  font: 700 7px "Liberation Sans", sans-serif;
  fill: #f5a623;
}
.logo-in {
  font: 700 25px "Liberation Sans", sans-serif;
  fill: #fff;
}
.logo-tuf {
  font: italic 700 13px "Liberation Sans", sans-serif;
  fill: #fff;
}
.logo-prime {
  font: 700 13px "Liberation Sans", sans-serif;
  fill: #111;
}

/* signup card */
.page {
  flex: 1;
  padding-bottom: 1px;
  display: flex;
  align-items: center;
  justify-content: center;
}
.card {
  width: 840px;
  height: 850px;
  padding: 48px;
  background-color: white;
  border: 2px solid #e2e8f0;
  border-radius: 16px;
  box-shadow: 0 2px 6px rgba(0,0,0,0.1);
}
.card-title {
  margin: 0;
  font-size: 48px;
  line-height: 54px;
  font-weight: 600;
  letter-spacing: -2px;
  word-spacing: 2px;
  color: #020817;
}
.card-sub {
  margin: 7px 0 47px;
  font-size: 28px;
  line-height: 40px;
  letter-spacing: -1px;
  word-spacing: 2.6px;
  color: #64748b;
}
.signup-form {
  display: flex;
  flex-direction: column;
  gap: 24px;
}
.field {
  height: 72px;
  padding: 2px 24px 0;
  border: 2px solid #e2e8f0;
  border-radius: 12px;
  box-shadow: 0 2px 4px rgba(0,0,0,0.05);
  outline: none;
  font-family: inherit;
  font-size: 28px;
  letter-spacing: -1.2px;
  word-spacing: 2px;
}
.field::placeholder {
  color: #64748b;
  opacity: 1;
}
.continue {
  height: 88px;
  padding-top: 2px;
  border-radius: 12px;
  background-color: #0f172a;
  color: white;
  font-size: 28px;
  font-weight: 600;
  letter-spacing: -1.2px;
}
.divider {
  height: 2px;
  margin: 40px 0 42px;
  border: none;
  background-color: #e2e8f0;
}
.switch {
  margin: 0;
  font-size: 32px;
  line-height: 48px;
  letter-spacing: -1.1px;
  word-spacing: 2.3px;
  color: #64748b;
}
.switch a {
  color: #0284c7;
}

/* windows taskbar */
.taskbar {
  flex: none;
  height: 95px;
  background-color: #1e2221;
  border-top: 1px solid #3a3f3d;
  display: grid;
  grid-template-columns: 1fr auto 1fr;
  align-items: center;
  color: white;
  font-size: 24px;
  letter-spacing: -1px;
}
.weather {
  position: relative;
  padding-left: 38px;
  display: flex;
  align-items: center;
  gap: 12px;
}
.weather-badge {
  position: absolute;
  left: 61px;
  top: -6px;
  width: 31px;
  height: 31px;
  border-radius: 50%;
  background-color: #ff9ca8;
  color: #111;
  font-size: 22px;
  line-height: 31px;
  text-align: center;
}
.weather-text {
  display: flex;
  flex-direction: column;
  line-height: 32px;
  margin-top: -2px;
  letter-spacing: -0.6px;
}
.weather-cond {
  color: #c8c8c8;
}
.task-center {
  display: flex;
  align-items: center;
}
.win-logo {
  margin-right: 27px;
}
.search {
  width: 439px;
  height: 63px;
  padding: 0 19px 0 22px;
  border-radius: 32px;
  background-color: #404241;
  border: 1px solid #565856;
  display: flex;
  align-items: center;
  color: #d0d0d0;
  font-size: 28px;
  letter-spacing: -1.2px;
}
.search-text {
  flex: 1;
  margin-left: 22px;
}
.task-apps {
  margin-left: 24px;
  display: flex;
  gap: 40px;
}
.task-item {
  position: relative;
  width: 48px;
  height: 48px;
}
.task-item svg {
  display: block;
}
.task-active::before {
  content: "";
  position: absolute;
  left: -15px;
  top: -16px;
  width: 78px;
  height: 80px;
  border-radius: 8px;
  background-color: #2b2f2e;
  border: 1px solid #383c3b;
}
.task-active svg {
  position: relative;
}
.task-bar {
  position: absolute;
  left: 9px;
  top: 56px;
  width: 31px;
  height: 6px;
  border-radius: 3px;
  background-color: #4cc2ff;
}
.task-dot {
  position: absolute;
  left: 18px;
  top: 56px;
  width: 12px;
  height: 6px;
  border-radius: 3px;
  background-color: #8a8a8a;
}
.profile-badge {
  position: absolute;
  width: 24px;
  height: 24px;
  border-radius: 50%;
  color: #ddd;
  font-size: 14px;
  line-height: 24px;
  text-align: center;
  letter-spacing: 0;
}
.profile-brown {
  left: 25px;
  top: 0;
  background-color: #5d4037;
}
.profile-orange {
  left: 26px;
  top: -10px;
  width: 30px;
  height: 30px;
  line-height: 30px;
  background-color: #ef6c00;
}
.tray {
  justify-self: end;
  padding-right: 39px;
  display: flex;
  align-items: center;
}
.tray-chevron {
  margin-right: 29px;
}
.tray-lang {
  width: 72px;
  margin-right: 24px;
  display: flex;
  flex-direction: column;
  align-items: center;
  line-height: 32px;
  letter-spacing: -0.6px;
}
.tray-icon {
  margin-right: 13px;
}
.tray-wifi {
  margin-right: 12px;
}
.tray-clock {
  margin-left: 20px;
  display: flex;
  flex-direction: column;
  align-items: flex-end;
  line-height: 32px;
  letter-spacing: 0;
}
```
